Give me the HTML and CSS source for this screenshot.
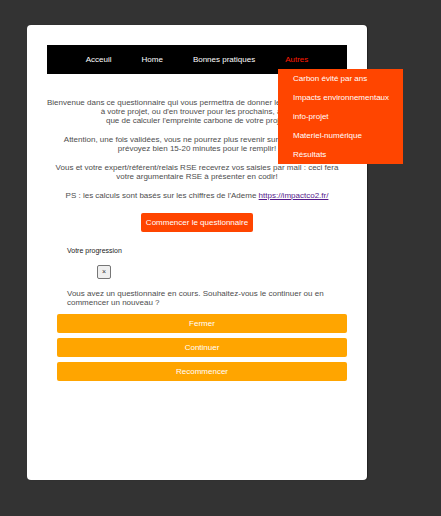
FILE: index.html
```html
<!DOCTYPE html>
<html lang="fr">
<head>
<meta charset="utf-8">
<title>Questionnaire</title>
<link rel="stylesheet" href="styles.css">
</head>
<body>
<div class="card">
  <nav class="nav">
    <a class="nav-link" href="#">Acceuil</a>
    <a class="nav-link" href="#">Home</a>
    <a class="nav-link" href="#">Bonnes pratiques</a>
    <a class="nav-link nav-active" href="#">Autres</a>
    <ul class="dropdown">
      <li class="dropdown-item">Carbon évité par ans</li>
      <li class="dropdown-item">Impacts environnementaux</li>
      <li class="dropdown-item">info-projet</li>
      <li class="dropdown-item">Materiel-numérique</li>
      <li class="dropdown-item">Résultats</li>
    </ul>
  </nav>
  <div class="intro">
    <p class="para">Bienvenue dans ce questionnaire qui vous permettra de donner les bonnes pratiques<br>à votre projet, ou d'en trouver pour les prochains, ainsi<br>que de calculer l'empreinte carbone de votre projet.</p>
    <p class="para">Attention, une fois validées, vous ne pourrez plus revenir sur vos réponses,<br>prévoyez bien 15-20 minutes pour le remplir!</p>
    <p class="para">Vous et votre expert/référent/relais RSE recevrez vos saisies par mail : ceci fera<br>votre argumentaire RSE à présenter en codir!</p>
    <p class="para">PS : les calculs sont basés sur les chiffres de l'Ademe <a class="link" href="#">https://impactco2.fr/</a></p>
    <button class="start-btn">Commencer le questionnaire</button>
  </div>
  <div class="progress">
    <div class="progress-title">Votre progression</div>
    <button class="close-btn">×</button>
    <p class="resume-text">Vous avez un questionnaire en cours. Souhaitez-vous le continuer ou en commencer un nouveau ?</p>
  </div>
  <div class="actions">
    <button class="action-btn">Fermer</button>
    <button class="action-btn">Continuer</button>
    <button class="action-btn">Recommencer</button>
  </div>
</div>
</body>
</html>
```

FILE: styles.css
```css
* { box-sizing: border-box; }
body {
  margin: 0;
  background: #333333;
  font-family: "Liberation Sans", Arial, sans-serif;
  width: 441px;
  height: 516px;
  overflow: hidden;
}
.card {
  margin: 25px 0 0 27px;
  width: 340px;
  height: 455px;
  background: #fff;
  border-radius: 4px;
  padding: 20px;
  box-shadow: 1px 0 1px rgba(0,0,0,0.35);
}
.nav {
  position: relative;
  height: 29px;
  background: #000;
  display: flex;
  justify-content: center;
  align-items: center;
  gap: 30px;
}
.nav-link {
  color: #fff;
  font-size: 8px;
  text-decoration: none;
  line-height: 9px;
}
.nav-active { color: #ff1a00; }
.dropdown {
  position: absolute;
  left: 231px;
  top: 24px;
  width: 125px;
  margin: 0;
  padding: 0;
  list-style: none;
  background: #ff4500;
  z-index: 2;
}
.dropdown-item {
  height: 19px;
  line-height: 19px;
  padding-left: 15px;
  color: #fff;
  font-size: 8px;
  white-space: nowrap;
}
.intro {
  margin-top: 24px;
  text-align: center;
}
.para {
  margin: 0 0 10px;
  font-size: 8px;
  line-height: 9px;
  color: #4d4d4d;
  white-space: nowrap;
}
.link { color: #551a8b; }
.start-btn {
  display: block;
  margin: 13px auto 0;
  height: 19px;
  width: 112px;
  padding: 0;
  border: none;
  border-radius: 2px;
  background: #ff4500;
  color: #fff;
  font-family: inherit;
  font-size: 8px;
}
.progress {
  margin-top: 15px;
  padding-left: 20px;
}
.progress-title {
  font-size: 7px;
  line-height: 8px;
  color: #1a1a1a;
}
.close-btn {
  display: block;
  margin: 10px 0 0 30px;
  width: 14px;
  height: 14px;
  padding: 0;
  border: 1px solid #767676;
  border-radius: 2px;
  background: #efefef;
  color: #333;
  font-family: inherit;
  font-size: 7px;
  line-height: 12px;
}
.resume-text {
  margin: 10px 0 0;
  font-size: 8px;
  line-height: 9px;
  color: #4d4d4d;
  width: 265px;
}
.actions {
  margin: 7px 0 0 10px;
  display: flex;
  flex-direction: column;
  gap: 5px;
}
.action-btn {
  height: 19px;
  padding: 0;
  border: none;
  border-radius: 2px;
  background: #ffa500;
  color: #fff;
  font-family: inherit;
  font-size: 8px;
}
```
